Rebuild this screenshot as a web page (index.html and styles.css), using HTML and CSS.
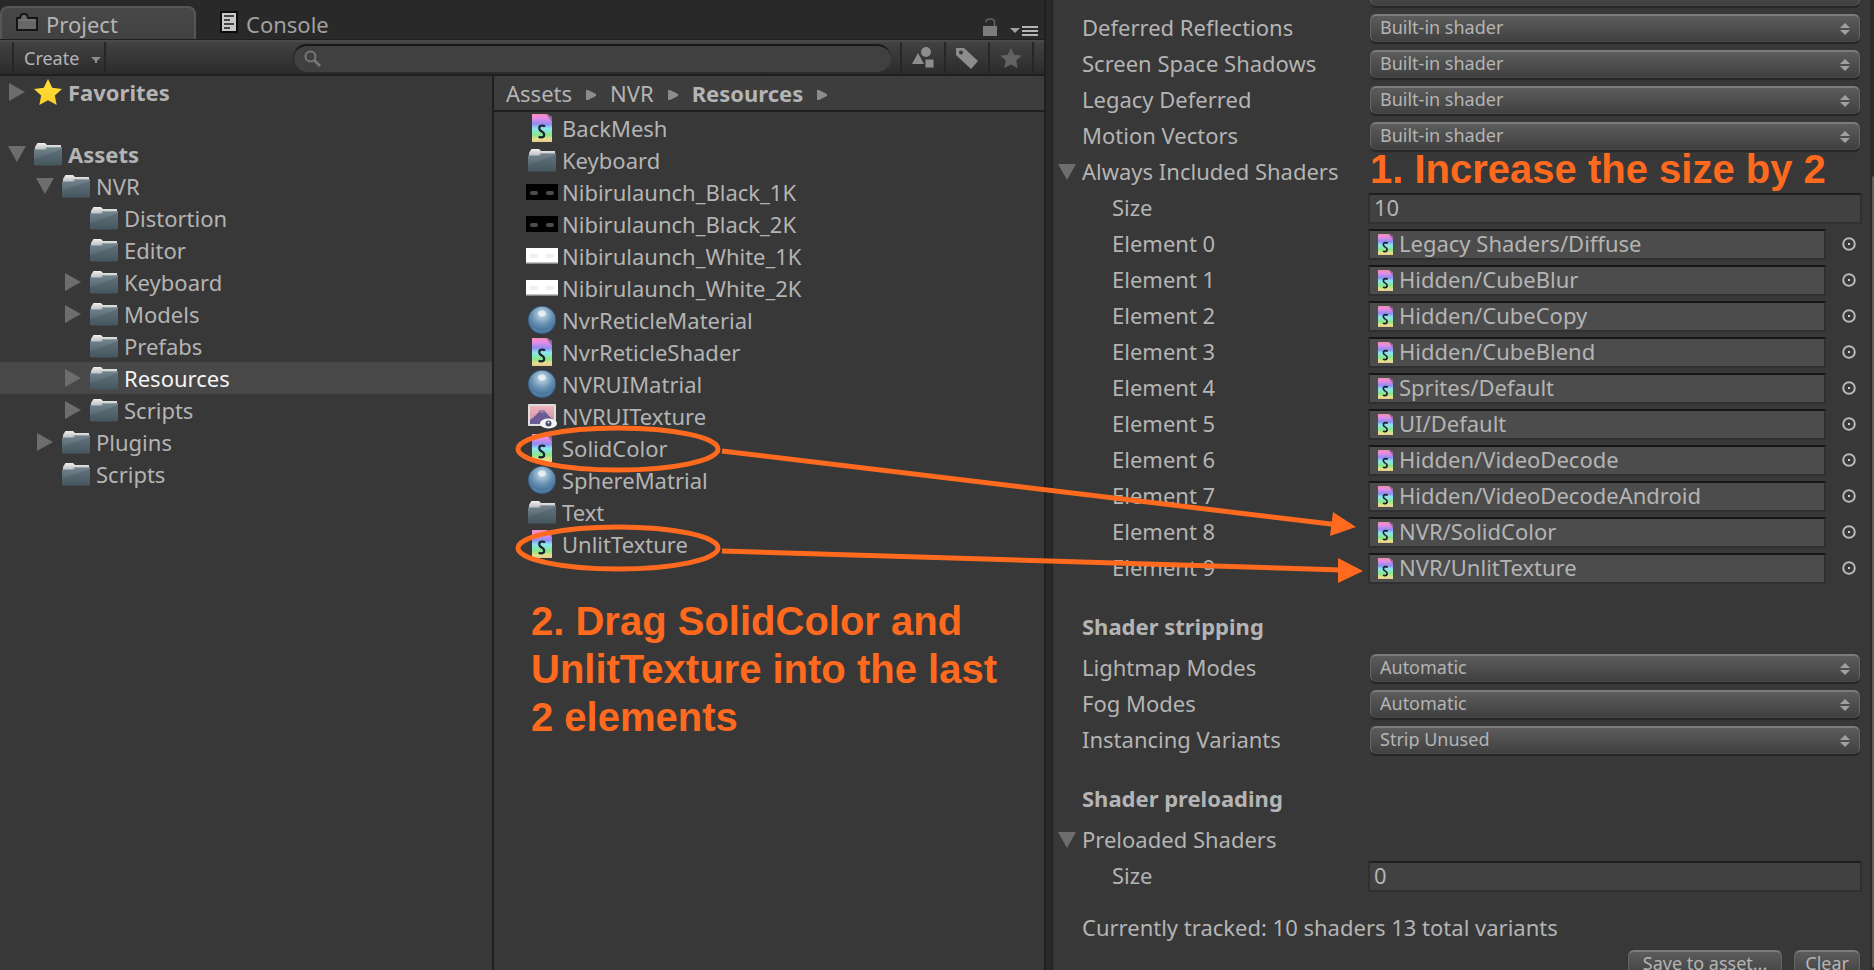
FILE: index.html
```
<!DOCTYPE html>
<html lang="en">
<head>
<meta charset="utf-8">
<title>Project - Graphics Settings</title>
<link rel="stylesheet" href="styles.css">
</head>
<body>
<svg class="defs" aria-hidden="true">
  <defs>
    <linearGradient id="gFolder" x1="0" y1="0" x2="0" y2="1"><stop offset="0" stop-color="#74858d"/><stop offset="1" stop-color="#4a5a62"/></linearGradient>
    <linearGradient id="gPaper" x1="0" y1="0" x2="0" y2="1"><stop offset="0" stop-color="#f0f0f0"/><stop offset="1" stop-color="#b4b4b4"/></linearGradient>
    <linearGradient id="gShader" x1="0" y1="0" x2="0" y2="1"><stop offset="0" stop-color="#f58fb4"/><stop offset=".16" stop-color="#e68ce8"/><stop offset=".36" stop-color="#8d8df0"/><stop offset=".52" stop-color="#8ae6f0"/><stop offset=".75" stop-color="#8ae68c"/><stop offset=".9" stop-color="#e6e08c"/><stop offset="1" stop-color="#e8c88c"/></linearGradient>
    <radialGradient id="gBall" cx=".5" cy=".28" r=".75"><stop offset="0" stop-color="#e4eff4"/><stop offset=".18" stop-color="#a9c6d8"/><stop offset=".5" stop-color="#6a94b4"/><stop offset=".85" stop-color="#456f9b"/><stop offset="1" stop-color="#3a5f88"/></radialGradient>
    <linearGradient id="gSky" x1="0" y1="0" x2="0" y2="1"><stop offset="0" stop-color="#f0b4b8"/><stop offset="1" stop-color="#c88fa6"/></linearGradient>
    <linearGradient id="gStar" x1="0" y1="0" x2="0" y2="1"><stop offset="0" stop-color="#ffe23c"/><stop offset="1" stop-color="#fccc28"/></linearGradient>
    <symbol id="folder" viewBox="0 0 28 24">
      <path d="M1 9V5L3.500 1H11l2 2h14v6z" fill="url(#gPaper)"/>
      <path d="M0 8q0-1 1-1h10l2-2h14q1 0 1 1v16q0 1.500-1.500 1.500h-25Q0 23.500 0 22z" fill="url(#gFolder)"/>
      <path d="M1 7.500h10.500l2-2H27" fill="none" stroke="#93a3aa"/>
      <path d="M0 17L28 7v15q0 1.500-1.500 1.500h-25Q0 23.500 0 22z" fill="#3f5058" opacity=".3"/>
    </symbol>
    <symbol id="shader" viewBox="0 0 20 28">
      <path d="M0 0h15l5 3v25H0z" fill="url(#gShader)"/>
      <path d="M14 0l6 2v6z" fill="#5a4a64" opacity=".55"/>
      <path d="M13 12.500q-1-1-3-1-2.800 0-2.800 2.700 0 1.800 2.600 3.300 2.400 1.300 2.400 3.200 0 2.700-3.200 2.700-1.300 0-2.400-.6" fill="none" stroke="#18202a" stroke-width="2.200"/>
    </symbol>
    <symbol id="ball" viewBox="0 0 28 28">
      <circle cx="14" cy="14" r="14" fill="#385b82"/><circle cx="14" cy="14" r="13.300" fill="url(#gBall)"/>
      <path d="M3 20q11 10 22 0-3 6.500-11 6.500T3 20z" fill="#7ba6cc" opacity=".4"/>
      <ellipse cx="14" cy="7.500" rx="4" ry="3" fill="#edf5f7" opacity=".75"/>
    </symbol>
    <symbol id="texture" viewBox="0 0 30 26">
      <rect x="1" y="1" width="28" height="22" rx="1" fill="#dedede"/>
      <rect x="3" y="3" width="24" height="18" fill="url(#gSky)"/>
      <path d="M3 17Q10 12 13 7h4q4 6 10 10v4H3z" fill="#6d5b93"/>
      <path d="M11.500 9.500L13 7h4l1.800 3-2-1-1.500 1.500L13.500 9z" fill="#9a82aa"/>
      <ellipse cx="21.500" cy="20.500" rx="8.500" ry="5" fill="#f4f4f4"/><circle cx="21.500" cy="20.500" r="3" fill="#4a4e72"/><circle cx="21.500" cy="19.500" r="1" fill="#fff"/>
    </symbol>
    <symbol id="dark" viewBox="0 0 32 16">
      <rect width="32" height="16" fill="#000"/>
      <rect x="4" y="7" width="8" height="4" rx="2" fill="#4c4c4c"/><rect x="20" y="7" width="8" height="4" rx="2" fill="#4c4c4c"/>
    </symbol>
    <symbol id="light" viewBox="0 0 32 16">
      <rect width="32" height="16" fill="#fff"/><rect y="14.500" width="32" height="1.500" fill="#888"/>
      <rect x="4" y="6" width="8" height="4" rx="2" fill="#efefef"/><rect x="20" y="6" width="8" height="4" rx="2" fill="#efefef"/>
    </symbol>
    <symbol id="right" viewBox="0 0 16 18"><path d="M0 0L16 9 0 18z" fill="#6d6d6d"/></symbol>
    <symbol id="down" viewBox="0 0 18 16"><path d="M0 0H18L9 16z" fill="#6d6d6d"/></symbol>
    <symbol id="crumb" viewBox="0 0 10 10"><path d="M0 0h2l8 4v2l-8 4H0z" fill="#8c8c8c"/></symbol>
    <symbol id="star" viewBox="0 0 28 26"><path d="M14 0l4.200 8.700 9.800 1.200-7.200 6.500L22.700 26 14 21.300 5.300 26l1.900-9.600L0 9.900l9.800-1.200z"/></symbol>
    <symbol id="pick" viewBox="0 0 14 14"><circle cx="7" cy="7" r="5.800" fill="none" stroke="#b8b8b8" stroke-width="2"/><rect x="6" y="6" width="2" height="2" fill="#d0d0d0"/></symbol>
  </defs>
</svg>

<div class="editor">
  <section class="project" aria-label="Project">
    <header class="tabs">
      <button class="tab tab-on" type="button">
        <svg class="tab-icon" width="22" height="18" viewBox="0 0 22 18"><path d="M1 17V5h3l1-3q.5-1 2-1h2q1.500 0 2 1l1 3h9v12z" fill="#686868" stroke="#151515" stroke-width="2"/><path d="M2 7h18" stroke="#7a7a7a"/></svg>
        Project
      </button>
      <button class="tab" type="button">
        <svg class="tab-icon" width="18" height="22" viewBox="0 0 18 22"><rect x="1" y="1" width="16" height="20" fill="#c8c8c8" stroke="#0c0c0c" stroke-width="2"/><path d="M4 5h10M4 9h6M4 13h10M4 17h6" stroke="#444" stroke-width="2"/></svg>
        Console
      </button>
      <div class="tab-tools">
        <svg width="14" height="18" viewBox="0 0 14 18"><path d="M0 8h14v10H0z" fill="#7c7c7c"/><path d="M3 4q0-3 4-3 4.500 0 4.500 3v4" fill="none" stroke="#666" stroke-width="1.500"/></svg>
        <svg width="28" height="12" viewBox="0 0 28 12"><path d="M0 4h10L5 9z" fill="#a0a0a0"/><path d="M12 3h16M12 7h16M12 11h16" stroke="#b4b4b4" stroke-width="2"/></svg>
      </div>
    </header>

    <div class="toolbar">
      <button class="create" type="button">Create
        <svg width="10" height="6" viewBox="0 0 10 6"><path d="M0 0h10L6 4v2H4V4z" fill="#8c8c8c"/></svg>
      </button>
      <label class="search">
        <svg width="17" height="17" viewBox="0 0 17 17"><circle cx="6.500" cy="6.500" r="5" fill="none" stroke="#777" stroke-width="2"/><path d="M10 10l6 6" stroke="#777" stroke-width="3"/></svg>
        <input type="search" aria-label="Search assets">
      </label>
      <div class="filters">
        <button type="button" aria-label="Search by type"><svg width="22" height="22" viewBox="0 0 22 22" fill="#8e8c8c"><circle cx="14" cy="5" r="5"/><path d="M0 17L6 6l6 11z"/><path d="M13 12h9v9h-9z" stroke="#363636" stroke-width="1"/></svg></button>
        <button type="button" aria-label="Search by label"><svg width="22" height="22" viewBox="0 0 22 22"><path d="M0 1h8l14 13-7 8L0 8z" fill="#8e8c8c"/><circle cx="5" cy="5.500" r="2" fill="#3a3a3a"/></svg></button>
        <button type="button" aria-label="Save search"><svg width="22" height="20" fill="#626262"><use href="#star"/></svg></button>
      </div>
    </div>

    <div class="browser">
      <nav class="tree" aria-label="Folders">
        <ul>
          <li class="row fav"><svg class="fold" width="16" height="18"><use href="#right"/></svg><svg class="ico" width="28" height="26" fill="url(#gStar)"><use href="#star"/></svg><b>Favorites</b></li>
          <li class="row"><svg class="fold" width="18" height="16"><use href="#down"/></svg><svg class="ico" width="28" height="24"><use href="#folder"/></svg><b>Assets</b></li>
          <li class="row l1"><svg class="fold" width="18" height="16"><use href="#down"/></svg><svg class="ico" width="28" height="24"><use href="#folder"/></svg>NVR</li>
          <li class="row l2"><span class="fold"></span><svg class="ico" width="28" height="24"><use href="#folder"/></svg>Distortion</li>
          <li class="row l2"><span class="fold"></span><svg class="ico" width="28" height="24"><use href="#folder"/></svg>Editor</li>
          <li class="row l2"><svg class="fold" width="16" height="18"><use href="#right"/></svg><svg class="ico" width="28" height="24"><use href="#folder"/></svg>Keyboard</li>
          <li class="row l2"><svg class="fold" width="16" height="18"><use href="#right"/></svg><svg class="ico" width="28" height="24"><use href="#folder"/></svg>Models</li>
          <li class="row l2"><span class="fold"></span><svg class="ico" width="28" height="24"><use href="#folder"/></svg>Prefabs</li>
          <li class="row l2 selected"><svg class="fold" width="16" height="18"><use href="#right"/></svg><svg class="ico" width="28" height="24"><use href="#folder"/></svg>Resources</li>
          <li class="row l2"><svg class="fold" width="16" height="18"><use href="#right"/></svg><svg class="ico" width="28" height="24"><use href="#folder"/></svg>Scripts</li>
          <li class="row l1"><svg class="fold" width="16" height="18"><use href="#right"/></svg><svg class="ico" width="28" height="24"><use href="#folder"/></svg>Plugins</li>
          <li class="row l1"><span class="fold"></span><svg class="ico" width="28" height="24"><use href="#folder"/></svg>Scripts</li>
        </ul>
      </nav>
      <div class="assets">
        <nav class="crumbs" aria-label="Path">
          <span>Assets</span><svg width="10" height="10"><use href="#crumb"/></svg>
          <span>NVR</span><svg width="10" height="10"><use href="#crumb"/></svg>
          <b>Resources</b><svg width="10" height="10"><use href="#crumb"/></svg>
        </nav>
        <ul class="list">
          <li class="row"><svg class="thumb" width="20" height="28"><use href="#shader"/></svg>BackMesh</li>
          <li class="row"><svg class="thumb" width="28" height="24"><use href="#folder"/></svg>Keyboard</li>
          <li class="row"><svg class="thumb" width="32" height="16"><use href="#dark"/></svg>Nibirulaunch_Black_1K</li>
          <li class="row"><svg class="thumb" width="32" height="16"><use href="#dark"/></svg>Nibirulaunch_Black_2K</li>
          <li class="row"><svg class="thumb" width="32" height="16"><use href="#light"/></svg>Nibirulaunch_White_1K</li>
          <li class="row"><svg class="thumb" width="32" height="16"><use href="#light"/></svg>Nibirulaunch_White_2K</li>
          <li class="row"><svg class="thumb" width="28" height="28"><use href="#ball"/></svg>NvrReticleMaterial</li>
          <li class="row"><svg class="thumb" width="20" height="28"><use href="#shader"/></svg>NvrReticleShader</li>
          <li class="row"><svg class="thumb" width="28" height="28"><use href="#ball"/></svg>NVRUIMatrial</li>
          <li class="row"><svg class="thumb" width="30" height="26"><use href="#texture"/></svg>NVRUITexture</li>
          <li class="row"><svg class="thumb" width="20" height="28"><use href="#shader"/></svg>SolidColor</li>
          <li class="row"><svg class="thumb" width="28" height="28"><use href="#ball"/></svg>SphereMatrial</li>
          <li class="row"><svg class="thumb" width="28" height="24"><use href="#folder"/></svg>Text</li>
          <li class="row"><svg class="thumb" width="20" height="28"><use href="#shader"/></svg>UnlitTexture</li>
        </ul>
      </div>
    </div>
  </section>

  <div class="splitter"></div>

  <section class="inspector" aria-label="Graphics settings">
    <form class="settings">
      <div class="prop"><label for="s0"></label><span class="popup"><select id="s0" aria-label="Deferred"><option></option></select></span></div>
      <div class="prop"><label for="s1">Deferred Reflections</label><span class="popup"><select id="s1"><option>Built-in shader</option></select></span></div>
      <div class="prop"><label for="s2">Screen Space Shadows</label><span class="popup"><select id="s2"><option>Built-in shader</option></select></span></div>
      <div class="prop"><label for="s3">Legacy Deferred</label><span class="popup"><select id="s3"><option>Built-in shader</option></select></span></div>
      <div class="prop"><label for="s4">Motion Vectors</label><span class="popup"><select id="s4"><option>Built-in shader</option></select></span></div>
      <div class="prop group"><svg width="18" height="16"><use href="#down"/></svg><span>Always Included Shaders</span></div>
      <div class="prop child"><label for="n1">Size</label><input class="number" id="n1" type="text" value="10"></div>
      <div class="prop child"><span>Element 0</span><div class="object"><svg width="15" height="21"><use href="#shader"/></svg>Legacy Shaders/Diffuse</div><button class="pick" type="button" aria-label="Pick element 0"><svg width="14" height="14"><use href="#pick"/></svg></button></div>
      <div class="prop child"><span>Element 1</span><div class="object"><svg width="15" height="21"><use href="#shader"/></svg>Hidden/CubeBlur</div><button class="pick" type="button" aria-label="Pick element 1"><svg width="14" height="14"><use href="#pick"/></svg></button></div>
      <div class="prop child"><span>Element 2</span><div class="object"><svg width="15" height="21"><use href="#shader"/></svg>Hidden/CubeCopy</div><button class="pick" type="button" aria-label="Pick element 2"><svg width="14" height="14"><use href="#pick"/></svg></button></div>
      <div class="prop child"><span>Element 3</span><div class="object"><svg width="15" height="21"><use href="#shader"/></svg>Hidden/CubeBlend</div><button class="pick" type="button" aria-label="Pick element 3"><svg width="14" height="14"><use href="#pick"/></svg></button></div>
      <div class="prop child"><span>Element 4</span><div class="object"><svg width="15" height="21"><use href="#shader"/></svg>Sprites/Default</div><button class="pick" type="button" aria-label="Pick element 4"><svg width="14" height="14"><use href="#pick"/></svg></button></div>
      <div class="prop child"><span>Element 5</span><div class="object"><svg width="15" height="21"><use href="#shader"/></svg>UI/Default</div><button class="pick" type="button" aria-label="Pick element 5"><svg width="14" height="14"><use href="#pick"/></svg></button></div>
      <div class="prop child"><span>Element 6</span><div class="object"><svg width="15" height="21"><use href="#shader"/></svg>Hidden/VideoDecode</div><button class="pick" type="button" aria-label="Pick element 6"><svg width="14" height="14"><use href="#pick"/></svg></button></div>
      <div class="prop child"><span>Element 7</span><div class="object"><svg width="15" height="21"><use href="#shader"/></svg>Hidden/VideoDecodeAndroid</div><button class="pick" type="button" aria-label="Pick element 7"><svg width="14" height="14"><use href="#pick"/></svg></button></div>
      <div class="prop child"><span>Element 8</span><div class="object"><svg width="15" height="21"><use href="#shader"/></svg>NVR/SolidColor</div><button class="pick" type="button" aria-label="Pick element 8"><svg width="14" height="14"><use href="#pick"/></svg></button></div>
      <div class="prop child"><span>Element 9</span><div class="object"><svg width="15" height="21"><use href="#shader"/></svg>NVR/UnlitTexture</div><button class="pick" type="button" aria-label="Pick element 9"><svg width="14" height="14"><use href="#pick"/></svg></button></div>
      <h2>Shader stripping</h2>
      <div class="prop"><label for="s5">Lightmap Modes</label><span class="popup"><select id="s5"><option>Automatic</option></select></span></div>
      <div class="prop"><label for="s6">Fog Modes</label><span class="popup"><select id="s6"><option>Automatic</option></select></span></div>
      <div class="prop"><label for="s7">Instancing Variants</label><span class="popup"><select id="s7"><option>Strip Unused</option></select></span></div>
      <h2>Shader preloading</h2>
      <div class="prop group"><svg width="18" height="16"><use href="#down"/></svg><span>Preloaded Shaders</span></div>
      <div class="prop child"><label for="n2">Size</label><input class="number" id="n2" type="text" value="0"></div>
      <p class="tracked">Currently tracked: 10 shaders 13 total variants</p>
      <div class="actions"><button class="save" type="button">Save to asset...</button><button type="button">Clear</button></div>
    </form>
    <div class="scroll"><div class="scroll-thumb"></div></div>
  </section>
</div>

<svg class="marks" viewBox="0 0 1874 970" preserveAspectRatio="xMinYMin meet" aria-hidden="true">
  <g fill="none" stroke="#ff6a1f" stroke-width="5">
    <ellipse cx="618" cy="449" rx="100" ry="21"/>
    <ellipse cx="618" cy="548" rx="100" ry="21"/>
    <path d="M722 451L1335 524.500M722 551L1342 570"/>
  </g>
  <path d="M1356 527L1333 512 1330 536zM1363 571L1338 558V583z" fill="#ff6a1f"/>
</svg>
<p class="note note-size">1. Increase the size by 2</p>
<p class="note note-drag">2. Drag SolidColor and<br>UnlitTexture into the last<br>2 elements</p>
</body>
</html>
```
FILE: styles.css
```
* { box-sizing: border-box; }
body {
  margin: 0;
  height: 100vh;
  overflow: hidden;
  position: relative;
  background: #383838;
  color: #b4b4b4;
  font: 22px/32px "Noto Sans", "Open Sans", sans-serif;
}
button, input, select { font: inherit; color: inherit; margin: 0; }
button { border: 0; padding: 0; background: none; }
ul { list-style: none; margin: 0; padding: 0; }
svg { flex: none; display: block; }
.defs { position: absolute; width: 0; height: 0; }

.editor { display: grid; grid-template-columns: minmax(0, 1046fr) 6px minmax(0, 822fr); height: 100%; }
.project { display: flex; flex-direction: column; background: #383838; border-right: 2px solid #1f1f1f; }
.splitter { background: #292929; }

.tabs { display: flex; height: 40px; padding-top: 6px; background: #292929; border-bottom: 1px solid #1f1f1f; }
.tab { display: flex; align-items: center; gap: 8px; width: 196px; padding: 2px 16px 0; color: #a0a0a0; white-space: nowrap; }
.tab + .tab { padding-left: 24px; }
.tab-on { background: linear-gradient(#484848, #414141); border: 2px solid #565656; border-bottom: 0; border-radius: 8px 8px 0 0; color: #b4b4b4; padding: 0 14px; }
.tab-icon { margin-bottom: 4px; }
.tab-tools { display: flex; align-items: flex-end; gap: 13px; margin-left: auto; padding: 0 6px 3px 0; }

.toolbar { display: flex; height: 36px; padding-left: 12px; background: linear-gradient(#424242, #2b2b2b); border-top: 2px solid #4a4a4a; border-bottom: 2px solid #1f1f1f; }
.create { display: flex; align-items: center; gap: 12px; width: 94px; padding-left: 10px; border: solid #262626; border-width: 0 2px; font-size: 18px; white-space: nowrap; }
.create svg { margin-top: 4px; }
.search { flex: 1; display: flex; align-items: center; gap: 8px; height: 28px; margin: 2px 9px 0 187px; padding: 0 10px 2px; border-radius: 14px; background: #404040; border-top: 2px solid #171717; border-left: 1px solid #262626; }
.search input { flex: 1; min-width: 0; border: 0; background: none; outline: 0; }
.filters { display: flex; width: 144px; border-left: 2px solid #262626; }
.filters button { width: 44px; display: grid; place-items: center; border-right: 2px solid #262626; }

.browser { flex: 1; display: flex; min-height: 0; }
.tree { flex: 492 1 0; min-width: 0; border-right: 2px solid #1f1f1f; }
.assets { flex: 550 1 0; min-width: 0; }
.row { display: flex; align-items: center; height: 32px; white-space: nowrap; }
.tree .row { padding-left: 8px; }
.tree .l1 { padding-left: 36px; }
.tree .l2 { padding-left: 64px; }
.tree .fav { margin-bottom: 30px; }
.tree .selected { background: #484848; color: #f4f4f4; }
.fold { width: 18px; margin-right: 8px; }
.ico { margin-right: 6px; }
.crumbs { display: flex; align-items: center; gap: 14px; height: 36px; padding-left: 12px; background: #3d3d3d; border-bottom: 2px solid #1f1f1f; }
.crumbs svg { margin-top: 4px; }
.list .row { display: grid; grid-template-columns: 32px 1fr; gap: 4px; padding-left: 32px; }
.thumb { justify-self: center; }

.inspector { display: grid; grid-template-columns: minmax(0, 1fr) 4px; overflow: hidden; border-left: 1px solid #222; }
.settings { padding: 0 8px 0 29px; }
.prop { display: grid; grid-template-columns: 286px minmax(0, 1fr); align-items: center; height: 36px; padding-right: 2px; }
.prop > label, .prop > span:not(.popup) { padding-bottom: 2px; }
.prop:first-child { margin-top: -26px; }
.child { grid-template-columns: 256px minmax(0, 1fr); padding-left: 30px; padding-right: 0; }
.child:has(.pick) { grid-template-columns: 256px minmax(0, 1fr) 36px; }
.group { grid-template-columns: 18px 1fr; gap: 6px; margin-left: -24px; }
.popup { position: relative; margin-left: 2px; }
.popup::before, .popup::after { content: ""; position: absolute; right: 10px; border: 5px solid transparent; pointer-events: none; }
.popup::before { top: 4px; border-bottom-color: #a0a0a0; }
.popup::after { top: 16px; border-top-color: #a0a0a0; }
select, .actions button {
  appearance: none;
  display: block;
  height: 28px;
  border: 1px solid #676767;
  border-top: 2px solid #7c7c7c;
  border-bottom-color: #484848;
  border-radius: 6px;
  background: linear-gradient(#5c5c5c, #404040);
  box-shadow: 0 2px 1px #262626;
  font-size: 18px;
  line-height: 22px;
}
select { width: 100%; padding: 0 9px 4px; }
.number, .object { width: 100%; height: 31px; border: 2px solid #303030; border-top-color: #1f1f1f; }
.number { padding: 0 4px 2px; background: #414141; outline: 0; }
.object { display: flex; align-items: center; gap: 6px; padding-left: 8px; line-height: 25px; padding-bottom: 2px; background: #4c4c4c; white-space: nowrap; border-top-color: #171717; }
.object svg { margin-top: 2px; }
.pick { display: grid; justify-content: end; padding-right: 6px; }
h2 { margin: 22px 0 6px; font-size: 22px; line-height: 36px; }
.tracked { margin: 15px 0 5px; line-height: 36px; }
.actions { display: flex; justify-content: flex-end; gap: 12px; padding-right: 2px; }
.actions button { padding: 0 10px 4px; }
.actions .save { padding: 0 14px 4px; }
.scroll { padding: 176px 0 10px 2px; background: #2b2b2b; }
.scroll-thumb { height: 100%; background: #5c5c5c; border-radius: 4px 0 0 4px; }

.marks { position: absolute; left: 0; top: 0; width: 100%; pointer-events: none; }
.note { position: absolute; margin: 0; color: #ff6a1f; font: bold 40px/48px "Liberation Sans", Arial, sans-serif; white-space: nowrap; }
.note-size { left: 1370px; top: 145px; }
.note-drag { left: 531px; top: 597px; }
```
